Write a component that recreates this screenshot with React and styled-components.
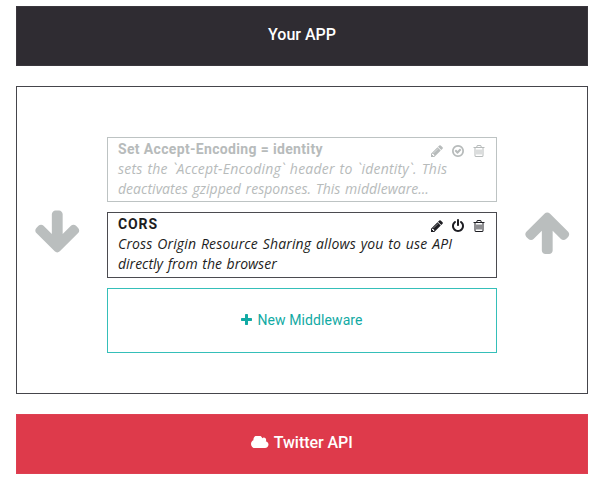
import React from "react";
import styled, { createGlobalStyle } from "styled-components";

const GlobalStyle = createGlobalStyle`
  *, *::before, *::after { box-sizing: border-box; }
  body { margin: 0; background: #fff; }
`;

const Page = styled.main`
  width: 600px;
  height: 492px;
  padding: 6px 12px 0 16px;
  display: flex;
  flex-direction: column;
  gap: 20px;
  overflow: hidden;
  font-family: Roboto, "Liberation Sans", sans-serif;
  color: #1d1d22;
`;

const Bar = styled.div`
  height: 60px;
  flex: none;
  display: flex;
  align-items: center;
  justify-content: center;
  gap: 5px;
  padding-bottom: 3px;
  background: ${(p) => p.$color};
  border: 1px solid ${(p) => p.$edge};
  color: #fff;
  font-size: 16px;
  font-weight: 500;
  letter-spacing: ${(p) => p.$tracking}px;
  white-space: pre;
`;

const Panel = styled.section`
  height: 308px;
  flex: none;
  display: grid;
  grid-template-columns: 90px 390px 90px;
  border: 1px solid #45454b;
`;

const ArrowCell = styled.div`
  display: flex;
  justify-content: center;
  padding-top: ${(p) => p.$top}px;
  padding-right: ${(p) => p.$right || 0}px;
  padding-left: ${(p) => p.$left || 0}px;
  color: #babebe;
`;

const List = styled.div`
  padding-top: 50px;
  display: flex;
  flex-direction: column;
  gap: 10px;
`;

const Card = styled.article`
  height: ${(p) => (p.$muted ? 65 : 66)}px;
  flex: none;
  padding: 1px 10px;
  border: 1px solid ${(p) => (p.$muted ? "#bdc3c3" : "#4b4b50")};
  color: ${(p) => (p.$muted ? "#b7bbbb" : "#1d1d22")};
`;

const CardHead = styled.div`
  height: 20px;
  display: flex;
  justify-content: space-between;
`;

const Title = styled.h2`
  margin: 0;
  font-size: 14px;
  line-height: 20px;
  font-weight: 700;
  letter-spacing: ${(p) => p.$tracking}px;
  white-space: nowrap;
`;

const Actions = styled.div`
  display: flex;
  gap: 7px;
  padding-top: 5px;
`;

const Line = styled.p`
  margin: 0;
  font-family: "Open Sans", "Noto Sans", sans-serif;
  font-size: 14px;
  line-height: 20px;
  font-style: italic;
  letter-spacing: ${(p) => p.$tracking}px;
  word-spacing: 1px;
  white-space: nowrap;
`;

const NewButton = styled.button`
  height: 65px;
  flex: none;
  padding: 0 0 2px;
  display: flex;
  align-items: center;
  justify-content: center;
  gap: 5px;
  border: 1px solid #35bfb9;
  border-radius: 0;
  background: #fff;
  color: #12aaa4;
  font: 400 14px Roboto, sans-serif;
  letter-spacing: 0.1px;
`;

const Glyph = styled.svg`
  width: ${(p) => p.$w}px;
  height: ${(p) => p.$h}px;
  flex: none;
  display: block;
  fill: currentColor;
`;

const icons = {
  pencil: "M491 1536l91-91-235-235-91 91v107h128v128h107zm523-928q0-22-22-22-10 0-17 7l-542 542q-7 7-7 17 0 22 22 22 10 0 17-7l542-542q7-7 7-17zm-54-192l416 416-832 832h-416v-416zm683 96q0 53-37 90l-166 166-416-416 166-165q36-38 90-38 53 0 91 38l235 234q37 39 37 91z",
  check: "M1299 813l-422 422q-19 19-45 19t-45-19l-294-294q-19-19-19-45t19-45l102-102q19-19 45-19t45 19l147 147 275-275q19-19 45-19t45 19l102 102q19 19 19 45t-19 45zm141 83q0-148-73-273t-198-198-273-73-273 73-198 198-73 273 73 273 198 198 273 73 273-73 198-198 73-273zm224 0q0 209-103 385.5t-279.5 279.5-385.5 103-385.5-103-279.5-279.5-103-385.5 103-385.5 279.5-279.5 385.5-103 385.5 103 279.5 279.5 103 385.5z",
  power: "M1664 896q0 156-61 298t-164 245-245 164-298 61-298-61-245-164-164-245-61-298q0-182 80.5-343t226.5-270q43-32 95.5-25t83.5 50q32 42 24.5 94.5t-49.5 84.5q-98 74-151.5 181t-53.5 228q0 104 40.5 198.5t109.5 163.5 163.5 109.5 198.5 40.5 198.5-40.5 163.5-109.5 109.5-163.5 40.5-198.5q0-121-53.5-228t-151.5-181q-42-32-49.5-84.5t24.5-94.5q31-43 84-50t95 25q146 109 226.5 270t80.5 343zm-640-768v640q0 52-38 90t-90 38-90-38-38-90v-640q0-52 38-90t90-38 90 38 38 90z",
  trash: "M704 736v576q0 14-9 23t-23 9h-64q-14 0-23-9t-9-23v-576q0-14 9-23t23-9h64q14 0 23 9t9 23zm256 0v576q0 14-9 23t-23 9h-64q-14 0-23-9t-9-23v-576q0-14 9-23t23-9h64q14 0 23 9t9 23zm256 0v576q0 14-9 23t-23 9h-64q-14 0-23-9t-9-23v-576q0-14 9-23t23-9h64q14 0 23 9t9 23zm128 724v-948h-896v948q0 22 7 40.5t14.5 27 10.5 8.5h832q3 0 10.5-8.5t14.5-27 7-40.5zm-672-1076h448l-48-117q-7-9-17-11h-317q-10 2-17 11zm928 32v64q0 14-9 23t-23 9h-96v948q0 83-47 143.5t-113 60.5h-832q-66 0-113-58.5t-47-141.5v-952h-96q-14 0-23-9t-9-23v-64q0-14 9-23t23-9h309l70-167q15-37 54-63t79-26h320q40 0 79 26t54 63l70 167h309q14 0 23 9t9 23z",
  plus: "M1600 736v192q0 40-28 68t-68 28h-416v416q0 40-28 68t-68 28h-192q-40 0-68-28t-28-68v-416h-416q-40 0-68-28t-28-68v-192q0-40 28-68t68-28h416v-416q0-40 28-68t68-28h192q40 0 68 28t28 68v416h416q40 0 68 28t28 68z",
  cloud: "M1984 1152q0 159-112.5 271.5t-271.5 112.5h-1088q-185 0-316.5-131.5t-131.5-316.5q0-132 71-241.5t187-163.5q-2-28-2-43 0-212 150-362t362-150q158 0 286.5 88t187.5 230q70-62 166-62 106 0 181 75t75 181q0 75-41 138 129 30 213 134.5t84 239.5z",
  down: "M1675 832q0 53-37 90l-651 652q-39 37-91 37-53 0-90-37l-651-652q-38-36-38-90 0-53 38-91l74-75q39-37 91-37 53 0 90 37l294 294v-704q0-52 38-90t90-38h128q52 0 90 38t38 90v704l294-294q37-37 90-37 52 0 91 37l75 75q37 39 37 91z",
  up: "M1675 971q0 51-37 90l-75 75q-38 38-91 38-54 0-90-38l-294-293v704q0 52-37.5 84.5t-90.5 32.5h-128q-53 0-90.5-32.5t-37.5-84.5v-704l-294 293q-36 38-90 38t-90-38l-75-75q-38-38-38-90 0-53 38-91l651-651q35-37 90-37 54 0 91 37l651 651q37 39 37 91z",
};

function Icon({ name, w = 14, h = w, viewBox = "0 0 1792 1792" }) {
  return (
    <Glyph $w={w} $h={h} viewBox={viewBox} aria-hidden="true">
      <path d={icons[name]} />
    </Glyph>
  );
}

const middlewares = [
  {
    title: "Set Accept-Encoding = identity",
    tracking: 0.34,
    muted: true,
    toggle: "check",
    lines: [
      { text: "sets the `Accept-Encoding` header to `identity`. This", tracking: 0.22 },
      { text: "deactivates gzipped responses. This middleware...", tracking: 0.03 },
    ],
  },
  {
    title: "CORS",
    tracking: 0.9,
    toggle: "power",
    lines: [
      { text: "Cross Origin Resource Sharing allows you to use API", tracking: 0.15 },
      { text: "directly from the browser", tracking: 0 },
    ],
  },
];

function MiddlewareCard({ item }) {
  return (
    <Card $muted={item.muted}>
      <CardHead>
        <Title $tracking={item.tracking}>{item.title}</Title>
        <Actions>
          <Icon name="pencil" />
          <Icon name={item.toggle} />
          <Icon name="trash" />
        </Actions>
      </CardHead>
      {item.lines.map((line) => (
        <Line key={line.text} $tracking={line.tracking}>{line.text}</Line>
      ))}
    </Card>
  );
}

export default function App() {
  return (
    <>
      <GlobalStyle />
      <Page>
        <Bar $color="#2f2c32" $edge="#3a373d" $tracking={0}>Your APP</Bar>
        <Panel>
          <ArrowCell $top={120} $right={9}><Icon name="down" w={50.5} /></ArrowCell>
          <List>
            {middlewares.map((item) => <MiddlewareCard key={item.title} item={item} />)}
            <NewButton type="button">
              <Icon name="plus" w={11} viewBox="192 128 1408 1408" />
              New Middleware
            </NewButton>
          </List>
          <ArrowCell $top={120} $left={10}><Icon name="up" w={50.5} /></ArrowCell>
        </Panel>
        <Bar $color="#de3a4b" $edge="#de4052" $tracking={-0.05}>
          <Icon name="cloud" w={17.5} h={12.5} viewBox="64 256 1920 1280" />
          Twitter API
        </Bar>
      </Page>
    </>
  );
}
